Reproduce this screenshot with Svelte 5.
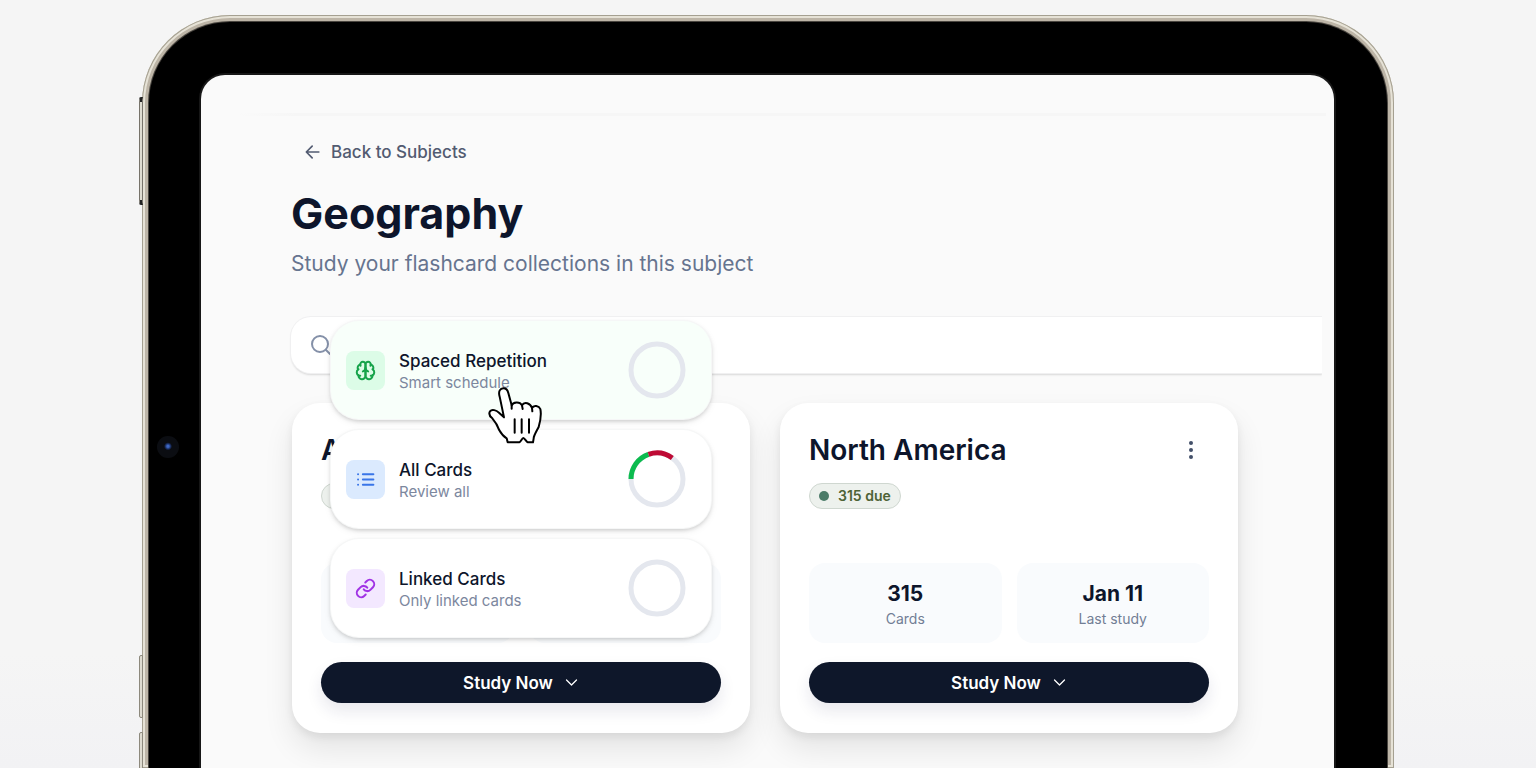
<script>
  const modes = [
    { name: 'Spaced Repetition', note: 'Smart schedule', tone: 'green', active: true },
    { name: 'All Cards', note: 'Review all', tone: 'blue', arcs: true },
    { name: 'Linked Cards', note: 'Only linked cards', tone: 'purple' }
  ];
  const decks = [
    { title: 'A', open: true, stats: [{}, {}] },
    {
      title: 'North America',
      due: '315 due',
      stats: [
        { value: '315', label: 'Cards' },
        { value: 'Jan 11', label: 'Last study' }
      ]
    }
  ];
</script>

<div class="stage">
  <div class="tablet">
    <span class="key power"></span>
    <span class="key volume-up"></span>
    <span class="key volume-down"></span>
    <div class="bezel">
      <span class="camera"></span>
      <div class="screen">
        <div class="topbar"></div>
        <main>
          <a class="back" href="#subjects">
            <svg width="20" height="20" viewBox="0 0 24 24" class="line"><path d="m11 19-7-7 7-7M19 12H4" /></svg>
            Back to Subjects
          </a>
          <h1>Geography</h1>
          <p class="lead">Study your flashcard collections in this subject</p>

          <label class="search">
            <svg width="24" height="24" viewBox="0 0 24 24" class="line"><circle cx="11" cy="11" r="8" /><path d="m21 21-4-4" /></svg>
            <input type="search" aria-label="Search" />
          </label>

          <div class="decks">
            {#each decks as deck}
              <article class="deck">
                <header>
                  <h2>{deck.title}</h2>
                  {#if !deck.open}
                    <button class="more" aria-label="More">
                      <svg width="24" height="24" viewBox="0 0 24 24" fill="currentColor"><circle cx="12" cy="5" r="2" /><circle cx="12" cy="12" r="2" /><circle cx="12" cy="19" r="2" /></svg>
                    </button>
                  {/if}
                </header>
                <span class="badge">{#if deck.due}<i></i>{deck.due}{/if}</span>
                <div class="stats">
                  {#each deck.stats as stat}
                    <div class="stat">
                      {#if stat.value}<strong>{stat.value}</strong><span>{stat.label}</span>{/if}
                    </div>
                  {/each}
                </div>
                <div class="action">
                  {#if deck.open}
                    <div class="menu">
                      {#each modes as mode}
                        <button class="mode" class:active={mode.active}>
                          <span class="tile {mode.tone}">
                            <svg width="21" height="21" viewBox="0 0 24 24" class="line">
                              {#if mode.tone === 'green'}
                                <path d="M12 5a3 3 0 1 0-5.997.125 4 4 0 0 0-2.526 5.77 4 4 0 0 0 .556 6.588A4 4 0 1 0 12 18Z" />
                                <path d="M12 5a3 3 0 1 1 5.997.125 4 4 0 0 1 2.526 5.77 4 4 0 0 1-.556 6.588A4 4 0 1 1 12 18Z" />
                                <path d="M15 13a4.5 4.5 0 0 1-3-4 4.5 4.5 0 0 1-3 4M17.599 6.5a3 3 0 0 0 .399-1.375M6.003 5.125A3 3 0 0 0 6.401 6.5M3.477 10.896a4 4 0 0 1 .585-.396M19.938 10.5a4 4 0 0 1 .585.396M6 18a4 4 0 0 1-1.967-.516M19.967 17.484A4 4 0 0 1 18 18" />
                              {:else if mode.tone === 'blue'}
                                <path d="M3.5 6h.01M3.5 12h.01M3.5 18h.01M9 6h12M9 12h12M9 18h12" />
                              {:else}
                                <path d="M10 13a5 5 0 0 0 7.54.54l3-3a5 5 0 0 0-7.07-7.07l-1.72 1.71" />
                                <path d="M14 11a5 5 0 0 0-7.54-.54l-3 3a5 5 0 0 0 7.07 7.07l1.71-1.71" />
                              {/if}
                            </svg>
                          </span>
                          <span class="copy"><b>{mode.name}</b><small>{mode.note}</small></span>
                          <svg class="ring" width="58" height="58" viewBox="0 0 58 58">
                            <circle cx="29" cy="29" r="26" stroke="#e4e7ee" />
                            {#if mode.arcs}
                              <path d="M3 29A26 26 0 0 1 20.5 4.4" stroke="#0cbb4f" />
                              <path d="M20.5 4.4A26 26 0 0 1 44.3 8" stroke="#be0a34" />
                            {/if}
                          </svg>
                        </button>
                      {/each}
                      <svg class="pointer" width="56" height="60" viewBox="51 46 168 180">
                        <path d="M102 140L89 78C84 61 91 53 100 53C109 53 113 59 115 67L125 104C129 94 149 91 156 104C163 92 181 97 186 112C191 102 207 105 211 115C215 133 210 155 206 169C200 181 191 195 191 203L189 215H173C169 214 164 202 160 202C156 202 152 214 148 215H113L110 203C101 198 94 190 88 179C83 165 74 151 67 143C58 136 56 129 60 122C66 114 79 119 87 126Z" fill="#fff" />
                        <path d="M125 104V114M156 104L158 115M186 112L187 122M134 146V186M155 146V186M177 146V186" fill="none" />
                      </svg>
                    </div>
                  {/if}
                  <button class="study">
                    Study Now
                    <svg width="15" height="15" viewBox="0 0 24 24" class="line"><path d="m4 8 8 8 8-8" /></svg>
                  </button>
                </div>
              </article>
            {/each}
          </div>
        </main>
      </div>
    </div>
  </div>
</div>

<style>
  :global(body) { margin: 0; }
  * { box-sizing: border-box; }
  .stage {
    height: 100vh;
    overflow: hidden;
    padding: 15px 142px 0;
    background: linear-gradient(#f5f5f5 85%, #f2f2f4);
    font-family: Inter, sans-serif;
    color: #0d152b;
    display: flex;
  }
  button, input { font: inherit; color: inherit; border: 0; margin: 0; padding: 0; background: none; }
  .line { fill: none; stroke: currentColor; stroke-width: 2; stroke-linecap: round; stroke-linejoin: round; flex: none; }
  .tablet {
    position: relative;
    flex: 1;
    display: flex;
    padding: 7px 7px 0;
    border-radius: 88px 88px 0 0;
    background: #bdb5a7;
    box-shadow: inset 0 0 0 1px #a5a091, inset 0 0 0 3px #e6e2d6;
  }
  .key {
    position: absolute;
    left: -3px;
    width: 4px;
    border: 1px solid #8d897d;
    background: #dedbd0;
    border-radius: 2px 0 0 2px;
  }
  .power { top: 82px; height: 108px; border-color: #77736a; border-top: 5px solid #222; border-bottom: 5px solid #222; }
  .volume-up { top: 640px; height: 63px; }
  .volume-down { top: 717px; height: 63px; }
  .bezel {
    position: relative;
    flex: 1;
    display: flex;
    padding: 53px 53px 0 52px;
    background: #000;
    border-radius: 81px 81px 0 0;
    box-shadow: 0 0 0 1px #4a4640;
  }
  .camera {
    position: absolute;
    left: 8px;
    top: 414px;
    width: 22px;
    height: 22px;
    border-radius: 50%;
    background: radial-gradient(circle at 50% 47%, #3f68c4 0 1px, #14254f 3px, #0b0d12 4px);
  }
  .screen {
    flex: 1;
    background: #fafafa;
    border-radius: 24px 24px 0 0;
    box-shadow: 0 0 0 2px #171717;
  }
  .topbar {
    height: 41px;
    margin: 0 8px 0 36px;
    background: linear-gradient(90deg, #fafafa, #f6f6f6 60px) bottom / 100% 3px no-repeat;
  }
  main { padding: 19px 96px 0 90px; }
  .back {
    display: flex;
    align-items: center;
    gap: 8px;
    width: max-content;
    padding-left: 12px;
    font-size: 17px;
    font-weight: 500;
    line-height: 34px;
    color: #525b71;
    text-decoration: none;
  }
  h1 { margin: 16px 0 0; font-size: 43px; line-height: 56px; font-weight: 700; }
  .lead { margin: 7px 0 0; font-size: 21px; line-height: 32px; color: #66748f; }
  .search {
    display: flex;
    align-items: center;
    height: 56px;
    margin: 37px -84px 0 0;
    padding-left: 18px;
    gap: 12px;
    background: #fff;
    border-radius: 20px 0 0 20px;
    box-shadow: 0 0 0 1px #f0f0f1, 0 2px 2px #d8d8d8;
    clip-path: inset(-2px 0 -6px -2px);
    color: #8490a8;
  }
  .search input { flex: 1; height: 100%; outline: 0; }
  .decks { display: grid; grid-template-columns: 1fr 1fr; gap: 30px; margin: 30px 0 0 1px; }
  .deck {
    display: flex;
    flex-direction: column;
    padding: 30px 29px;
    background: #fff;
    border-radius: 28px;
    box-shadow: 0 16px 30px rgba(0, 0, 0, .09), 0 4px 8px rgba(0, 0, 0, .07);
  }
  .deck header { display: flex; align-items: center; justify-content: space-between; height: 34px; }
  h2 { margin: 0; font-size: 28px; line-height: 34px; font-weight: 600; }
  .more { display: grid; place-items: center; width: 36px; height: 34px; color: #435069; }
  .badge {
    display: flex;
    align-items: center;
    align-self: flex-start;
    gap: 9px;
    height: 26px;
    min-width: 91px;
    margin-top: 16px;
    padding: 0 9px 1px;
    border: 1px solid #cfd7d0;
    border-radius: 13px;
    background: #edf1ed;
    color: #4e6336;
    font-size: 14px;
    font-weight: 600;
  }
  .badge i { width: 10px; height: 10px; border-radius: 50%; background: #4b7b68; }
  .stats { display: grid; grid-template-columns: 1fr 1fr; gap: 15px; margin-top: 54px; }
  .stat {
    display: flex;
    flex-direction: column;
    align-items: center;
    height: 80px;
    padding-top: 17px;
    border-radius: 16px;
    background: #f9fbfd;
  }
  .stat strong { font-size: 21px; line-height: 28px; font-weight: 700; }
  .stat span { font-size: 14px; line-height: 22px; color: #727e95; }
  .action { position: relative; margin-top: 19px; }
  .study {
    display: flex;
    align-items: center;
    justify-content: center;
    gap: 11px;
    width: 100%;
    height: 41px;
    border-radius: 21px;
    background: #0e172a;
    color: #fff;
    font-size: 17px;
    font-weight: 600;
    box-shadow: 0 8px 16px rgba(30, 25, 80, .1);
  }
  .menu {
    position: absolute;
    bottom: calc(100% + 25px);
    left: 10px;
    right: 10px;
    display: flex;
    flex-direction: column;
    gap: 11px;
  }
  .mode {
    display: flex;
    align-items: center;
    height: 98px;
    padding: 0 25px 0 15px;
    border-radius: 28px;
    background: #fff;
    text-align: left;
    box-shadow: 0 0 0 1px #f6f7f7, 0 2px 4px rgba(0, 0, 0, .18), 0 3px 9px rgba(0, 0, 0, .07);
  }
  .active { background: #f8fffa; }
  .tile { display: grid; place-items: center; width: 39px; height: 39px; border-radius: 8px; }
  .tile .line { stroke-width: 2.3; }
  .green { background: #dcfce7; color: #16a34a; }
  .blue { background: #dbeafe; color: #3975e8; }
  .purple { background: #f3e8ff; color: #a133e5; }
  .copy { display: flex; flex-direction: column; flex: 1; margin-left: 14px; padding-top: 2px; }
  .copy b { font-size: 17px; line-height: 22px; font-weight: 500; }
  .copy small { font-size: 15px; line-height: 21px; color: #7c879e; }
  .ring { fill: none; stroke-width: 5; }
  .pointer {
    position: absolute;
    left: 156px;
    top: 65px;
    stroke: #000;
    stroke-width: 6;
    stroke-linecap: round;
    stroke-linejoin: round;
  }
</style>
